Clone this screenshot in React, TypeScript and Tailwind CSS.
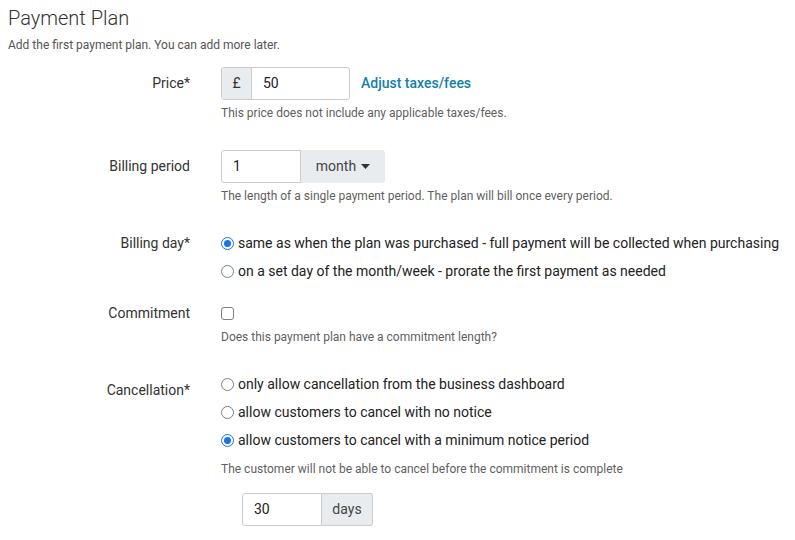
import React from "react";

function Radio({ checked }: { checked?: boolean }) {
  return checked ? (
    <span className="flex h-[13px] w-[13px] shrink-0 items-center justify-center rounded-full border-[1.5px] border-[#1a73e8] bg-white">
      <span className="h-[7px] w-[7px] rounded-full bg-[#1a73e8]" />
    </span>
  ) : (
    <span className="h-[13px] w-[13px] shrink-0 rounded-full border border-[#808080] bg-white" />
  );
}

function RadioRow({ checked, children }: { checked?: boolean; children: React.ReactNode }) {
  return (
    <label className="flex h-[28px] items-center gap-[4px] whitespace-nowrap text-[14px] text-[#222]">
      <Radio checked={checked} />
      <span>{children}</span>
    </label>
  );
}

function Help({ children, className = "" }: { children: React.ReactNode; className?: string }) {
  return <p className={"text-[12px] leading-[16px] text-[#5f5f5f] " + className}>{children}</p>;
}

function Label({ children, className = "" }: { children: React.ReactNode; className?: string }) {
  return (
    <div className={"w-[182px] shrink-0 text-right text-[14px] leading-[20px] text-[#333] " + className}>
      {children}
    </div>
  );
}

function Row({ label, labelClass, children, className = "" }: {
  label: string;
  labelClass?: string;
  children: React.ReactNode;
  className?: string;
}) {
  return (
    <div className={"flex " + className}>
      <Label className={labelClass}>{label}</Label>
      <div className="ml-[31px]">{children}</div>
    </div>
  );
}

export default function App() {
  return (
    <div
      className="h-[540px] w-[795px] overflow-hidden bg-white px-[8px] pt-[4px]"
      style={{ fontFamily: "Roboto, 'Liberation Sans', sans-serif" }}
    >
      <h1 className="text-[20px] font-light leading-[28px] text-[#333]">Payment Plan</h1>
      <p className="mt-[4px] text-[12px] text-[#555]">Add the first payment plan. You can add more later.</p>

      <Row label="Price*" labelClass="pt-[6px]" className="mt-[13px]">
        <div className="flex items-center">
          <div className="flex h-[33px] w-[129px] overflow-hidden rounded-[3px] border border-[#ccc]">
            <span className="flex w-[30px] items-center justify-center border-r border-[#ccc] bg-[#e9ecef] text-[14px] text-[#333]">
              £
            </span>
            <span className="flex items-center pl-[11px] text-[14px] text-[#222]">50</span>
          </div>
          <a className="ml-[11px] text-[14px] font-medium text-[#1380a8]">Adjust taxes/fees</a>
        </div>
        <Help className="mt-[5px]">This price does not include any applicable taxes/fees.</Help>
      </Row>

      <Row label="Billing period" labelClass="pt-[6px]" className="mt-[29px]">
        <div className="flex h-[33px]">
          <span className="flex w-[80px] items-center rounded-l-[3px] border border-[#ccc] pl-[11px] text-[14px] text-[#222]">
            1
          </span>
          <span className="flex w-[84px] items-center justify-center gap-[5px] rounded-r-[3px] bg-[#e9ecef] text-[14px] text-[#444]">
            month
            <svg width="9" height="5" viewBox="0 0 9 5">
              <path d="M0 0h9L4.5 5z" fill="#333" />
            </svg>
          </span>
        </div>
        <Help className="mt-[5px]">
          The length of a single payment period. The plan will bill once every period.
        </Help>
      </Row>

      <Row label="Billing day*" labelClass="pt-[4px]" className="mt-[25px]">
        <RadioRow checked>
          same as when the plan was purchased - full payment will be collected when purchasing
        </RadioRow>
        <RadioRow>on a set day of the month/week - prorate the first payment as needed</RadioRow>
      </Row>

      <Row label="Commitment" labelClass="pt-[4px]" className="mt-[14px]">
        <div className="flex h-[28px] items-center">
          <span className="h-[13px] w-[13px] rounded-[3px] border border-[#808080] bg-white" />
        </div>
        <Help className="mt-[2px]">Does this payment plan have a commitment length?</Help>
      </Row>

      <Row label="Cancellation*" labelClass="pt-[10px]" className="mt-[25px]">
        <RadioRow>only allow cancellation from the business dashboard</RadioRow>
        <RadioRow>allow customers to cancel with no notice</RadioRow>
        <RadioRow checked>allow customers to cancel with a minimum notice period</RadioRow>
        <Help className="mt-[7px]">
          The customer will not be able to cancel before the commitment is complete
        </Help>
        <div className="ml-[21px] mt-[16px] flex h-[33px]">
          <span className="flex w-[80px] items-center rounded-l-[3px] border border-[#ccc] pl-[11px] text-[14px] text-[#222]">
            30
          </span>
          <span className="flex w-[51px] items-center justify-center rounded-r-[3px] border border-l-0 border-[#ccc] bg-[#e9ecef] text-[14px] text-[#444]">
            days
          </span>
        </div>
      </Row>
    </div>
  );
}
